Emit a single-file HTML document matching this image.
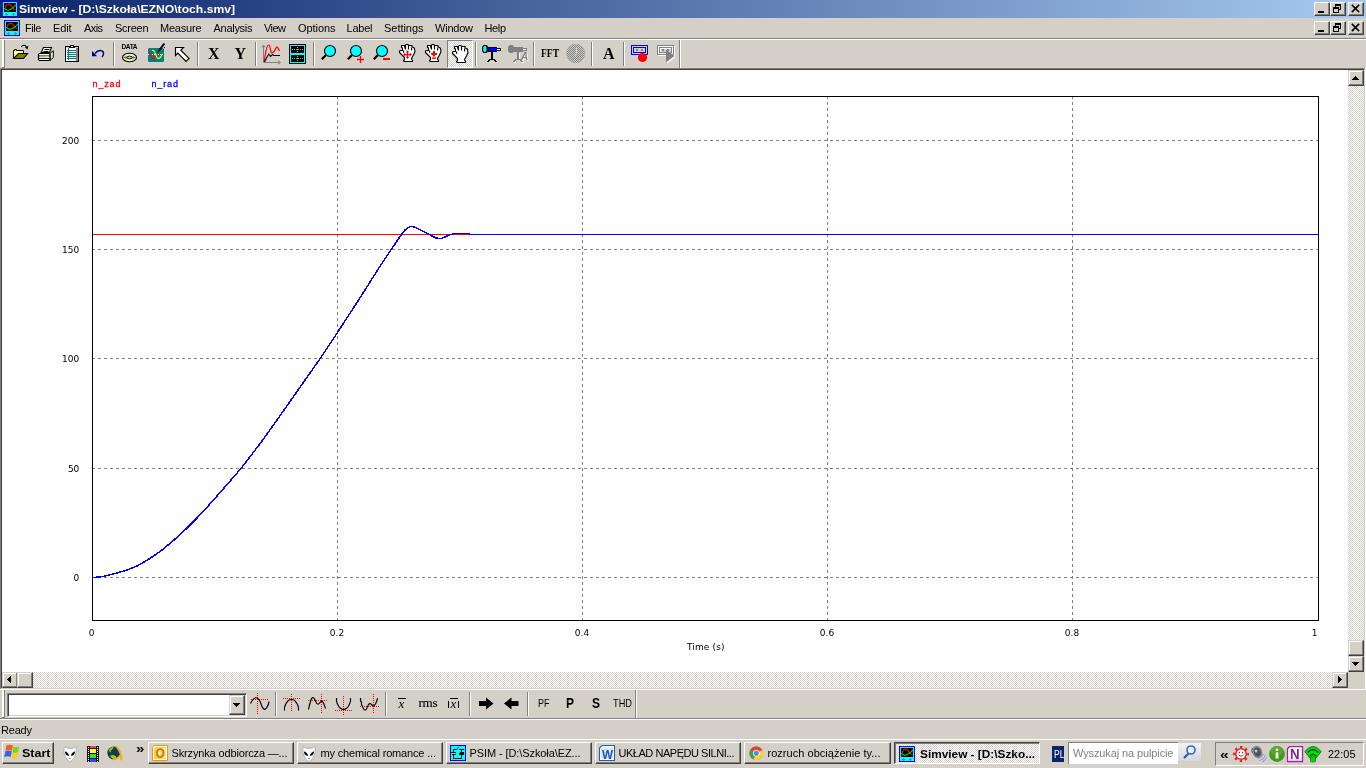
<!DOCTYPE html>
<html lang="pl"><head><meta charset="utf-8"><title>Simview - [D:\Szkoła\EZNO\toch.smv]</title>
<style>
html,body{margin:0;padding:0;}
body{width:1366px;height:768px;overflow:hidden;background:#d4d0c8;position:relative;font:11px 'Liberation Sans',sans-serif;}
.a{position:absolute;}
.t{position:absolute;white-space:pre;}
svg{position:absolute;overflow:visible;}
.btn{position:absolute;background:#d4d0c8;box-sizing:border-box;border:1px solid;border-color:#fff #404040 #404040 #fff;box-shadow:inset -1px -1px 0 #808080, inset 1px 1px 0 #d4d0c8;}
.sbtn{position:absolute;background:#d4d0c8;box-sizing:border-box;border:1px solid;border-color:#d4d0c8 #404040 #404040 #d4d0c8;box-shadow:inset -1px -1px 0 #808080, inset 1px 1px 0 #fff;}
.dither{background:repeating-conic-gradient(#fff 0% 25%, #d4d0c8 0% 50%) 0 0/2px 2px;}
.sep{position:absolute;width:1px;background:#808080;box-shadow:1px 0 0 #fff;}
.hl{position:absolute;height:1px;}
.vl{position:absolute;width:1px;}
#wrap{position:absolute;left:0;top:0;width:1366px;height:768px;will-change:transform;}
</style></head><body><div id="wrap">
<div class="a" style="left:0;top:0;width:1366px;height:18px;background:linear-gradient(90deg,#0a246a 0%,#a6caf0 100%);"></div><svg style="left:2px;top:1px" width="16" height="16" viewBox="0 0 16 16" shape-rendering="crispEdges"><rect x="0" y="0" width="16" height="16" fill="#0000ff"/><rect x="1" y="1" width="14" height="14" fill="#00ffff"/><rect x="2" y="2" width="12" height="9" fill="#000"/><path d="M3.500 7.500V5.500L5 3.700L7 3.200L8.500 4L12 8.300L13.800 8.500" fill="none" stroke="#ff0000" stroke-width="1.200" shape-rendering="auto"/><path d="M2.300 7.200L5 9.300L6.500 9.300L9.500 7.800L11 6.800L14 3.800" fill="none" stroke="#00e000" stroke-width="1.100" shape-rendering="auto"/><path d="M3 13.500h3M4.500 12v3M10 13.500h3M11.500 12v3" stroke="#808080" stroke-width="1" fill="none"/></svg><span class="t" style="left:19.00px;top:3px;line-height:12px;font:normal bold 11px/12px 'Liberation Sans',sans-serif;color:#fff;transform:scaleX(1.1043);transform-origin:left;">Simview - [D:\Szkoła\EZNO\toch.smv]</span><div class="btn" style="left:1314px;top:2px;width:16px;height:14px"></div><div class="btn" style="left:1330px;top:2px;width:16px;height:14px"></div><div class="btn" style="left:1348px;top:2px;width:16px;height:14px"></div><svg style="left:1314px;top:2px" width="50" height="14" viewBox="0 0 50 14" shape-rendering="crispEdges"><rect x="4" y="9" width="6" height="2" fill="#000"/><path d="M21 2h6v2h-6zM21 4h1v2h-1zM26 4h1v4h-1zM25 7h2v1h-2z" fill="#000"/><path d="M19 5h6v2h-6zM19 7h1v4h-1zM24 7h1v4h-1zM19 10h6v1h-6z" fill="#000"/><path d="M38.5 3.5l6 6M44.5 3.5l-6 6" stroke="#000" stroke-width="1.7" fill="none" shape-rendering="auto" stroke-linecap="square"/></svg><svg style="left:4px;top:20px" width="16" height="16" viewBox="0 0 16 16" shape-rendering="crispEdges"><rect x="0" y="0" width="16" height="16" fill="#0000ff"/><rect x="1" y="1" width="14" height="14" fill="#00ffff"/><rect x="2" y="2" width="12" height="9" fill="#000"/><path d="M3.500 7.500V5.500L5 3.700L7 3.200L8.500 4L12 8.300L13.800 8.500" fill="none" stroke="#ff0000" stroke-width="1.200" shape-rendering="auto"/><path d="M2.300 7.200L5 9.300L6.500 9.300L9.500 7.800L11 6.800L14 3.800" fill="none" stroke="#00e000" stroke-width="1.100" shape-rendering="auto"/><path d="M3 13.500h3M4.500 12v3M10 13.500h3M11.500 12v3" stroke="#808080" stroke-width="1" fill="none"/></svg><span class="t" style="left:25.00px;top:22px;line-height:12px;font:normal normal 11px/12px 'Liberation Sans',sans-serif;color:#000;letter-spacing:-0.411px;">File</span><span class="t" style="left:53.00px;top:22px;line-height:12px;font:normal normal 11px/12px 'Liberation Sans',sans-serif;color:#000;letter-spacing:-0.156px;">Edit</span><span class="t" style="left:84.00px;top:22px;line-height:12px;font:normal normal 11px/12px 'Liberation Sans',sans-serif;color:#000;letter-spacing:-0.594px;">Axis</span><span class="t" style="left:115.00px;top:22px;line-height:12px;font:normal normal 11px/12px 'Liberation Sans',sans-serif;color:#000;letter-spacing:-0.272px;">Screen</span><span class="t" style="left:160.00px;top:22px;line-height:12px;font:normal normal 11px/12px 'Liberation Sans',sans-serif;color:#000;letter-spacing:-0.216px;">Measure</span><span class="t" style="left:213.50px;top:22px;line-height:12px;font:normal normal 11px/12px 'Liberation Sans',sans-serif;color:#000;letter-spacing:-0.281px;">Analysis</span><span class="t" style="left:264.00px;top:22px;line-height:12px;font:normal normal 11px/12px 'Liberation Sans',sans-serif;color:#000;letter-spacing:-0.552px;">View</span><span class="t" style="left:298.00px;top:22px;line-height:12px;font:normal normal 11px/12px 'Liberation Sans',sans-serif;color:#000;letter-spacing:-0.070px;">Options</span><span class="t" style="left:346.50px;top:22px;line-height:12px;font:normal normal 11px/12px 'Liberation Sans',sans-serif;color:#000;letter-spacing:-0.230px;">Label</span><span class="t" style="left:384.00px;top:22px;line-height:12px;font:normal normal 11px/12px 'Liberation Sans',sans-serif;color:#000;letter-spacing:-0.036px;">Settings</span><span class="t" style="left:435.00px;top:22px;line-height:12px;font:normal normal 11px/12px 'Liberation Sans',sans-serif;color:#000;letter-spacing:-0.225px;">Window</span><span class="t" style="left:484.50px;top:22px;line-height:12px;font:normal normal 11px/12px 'Liberation Sans',sans-serif;color:#000;letter-spacing:-0.375px;">Help</span><div class="btn" style="left:1314px;top:21px;width:16px;height:14px"></div><div class="btn" style="left:1330px;top:21px;width:16px;height:14px"></div><div class="btn" style="left:1348px;top:21px;width:16px;height:14px"></div><svg style="left:1314px;top:21px" width="50" height="14" viewBox="0 0 50 14" shape-rendering="crispEdges"><rect x="4" y="9" width="6" height="2" fill="#000"/><path d="M21 2h6v2h-6zM21 4h1v2h-1zM26 4h1v4h-1zM25 7h2v1h-2z" fill="#000"/><path d="M19 5h6v2h-6zM19 7h1v4h-1zM24 7h1v4h-1zM19 10h6v1h-6z" fill="#000"/><path d="M38.5 3.5l6 6M44.5 3.5l-6 6" stroke="#000" stroke-width="1.7" fill="none" shape-rendering="auto" stroke-linecap="square"/></svg><div class="hl" style="left:0;top:38px;width:1366px;background:#808080"></div><div class="hl" style="left:0;top:39px;width:1366px;background:#fff"></div><div class="a" style="left:2px;top:40px;width:2px;height:27px;background:#fff"></div><div class="a" style="left:4px;top:40px;width:1px;height:28px;background:#808080"></div><div class="a" style="left:2px;top:67px;width:3px;height:1px;background:#808080"></div><div class="sep" style="left:113px;top:42px;height:24px"></div><div class="sep" style="left:197px;top:42px;height:24px"></div><div class="sep" style="left:255px;top:42px;height:24px"></div><div class="sep" style="left:313px;top:42px;height:24px"></div><div class="sep" style="left:475px;top:42px;height:24px"></div><div class="sep" style="left:533px;top:42px;height:24px"></div><div class="sep" style="left:591px;top:42px;height:24px"></div><div class="sep" style="left:623px;top:42px;height:24px"></div><div class="sep" style="left:679px;top:40px;height:28px"></div><div class="hl" style="left:0;top:68px;width:1366px;background:#808080"></div><div class="hl" style="left:1px;top:69px;width:1364px;background:#404040"></div><svg style="left:0;top:40px" width="700" height="28" viewBox="0 40 700 28"><path d="M13.500 58.500V50.500H14.500V49.500H16.500V50.500H23.500V53.500H19L14 58.500Z" fill="#ffff80" stroke="#000" stroke-width="1" stroke-linejoin="miter"/><path d="M13.500 58.500L18.500 53.500H27.500L23.500 58.500Z" fill="#808000" stroke="#000" stroke-width="1.100"/><path d="M21.300 46.800q1.800-2.400 4-1.200q1.400 1 1.600 2.400" fill="none" stroke="#000" stroke-width="1.100"/><path d="M25 47.200l2.400 2.200 1.100-3.400z" fill="#000"/><path d="M43.500 47.500H51.500L49.500 52.500H41.200Z" fill="#fff" stroke="#000" stroke-width="1.100"/><path d="M44.500 49.500h5M43.500 51.500h5" stroke="#000" stroke-width="1"/><path d="M50 53.200L53.300 50.800V57.600L50 60.500Z" fill="#e8e6e2" stroke="#000" stroke-width="1"/><rect x="38.500" y="53.500" width="11.500" height="7" rx="1.200" fill="#fff" stroke="#000" stroke-width="1.200"/><path d="M39 56h11M39 58.400h11" stroke="#000" stroke-width="1"/><rect x="39.500" y="56.600" width="9.500" height="1.200" fill="#e0deda"/><rect x="45" y="56.600" width="3" height="1.200" fill="#ffff00"/><g shape-rendering="crispEdges"><rect x="65.500" y="46.500" width="13" height="15" fill="#d4d0c8" stroke="#000"/><rect x="66" y="48" width="10" height="13" fill="#fff"/><rect x="76" y="48" width="2" height="13" fill="#808080"/><path d="M67 50.500h9M67 52.500h9M67 54.500h9M67 56.500h9M67 58.500h9" stroke="#008080"/><rect x="68" y="48" width="1" height="12" fill="#008080"/><path d="M69.500 47.500v-1h1v-1h3v1h1v1z" fill="#fff" stroke="#000"/></g><path d="M95 53.500Q97.500 50.300 100.500 50.500Q103.800 51 103.500 54Q103.300 55.500 102 57" fill="none" stroke="#000080" stroke-width="1.400"/><path d="M92 51v5.200h5.200z" fill="#000080"/><ellipse cx="129.5" cy="57.5" rx="7" ry="4.200" fill="#fff" stroke="#000" stroke-width="1.100"/><path d="M123.500 57.500h12" stroke="#ff00ff" stroke-width="1.200"/><path d="M125.500 55l8 5M125.500 60l8-5" stroke="#ffff00" stroke-width="1.200"/><path d="M124.500 56.300l10 2.400M124.500 58.700l10-2.400" stroke="#00ff00" stroke-width=".8"/><ellipse cx="129.5" cy="57.5" rx="2.600" ry="1.400" fill="#d4d0c8" stroke="#000" stroke-width="1"/><rect x="148" y="48" width="16" height="14" rx="1.500" fill="#008080"/><path d="M148 54.500h16" stroke="#fff" stroke-width="1" stroke-dasharray="1 1"/><path d="M149.500 50.500q1.500 8 3.500 8.500t3.500-7" fill="none" stroke="#ff0000" stroke-width="1.200"/><path d="M152 50.500q2-1 3.500 3.500t3 4.500q2 0 3.500-4.500" fill="none" stroke="#ffff00" stroke-width="1.100"/><path d="M164.300 43.500l-5.500 7.500" stroke="#000" stroke-width="2"/><path d="M158.500 51l-1 1.500" stroke="#000" stroke-width="1"/><rect x="164" y="47" width="1" height="1" fill="#0000ff"/><path d="M175.500 47.500H183.500L180.800 50.200L189 58.400L186 61.400L177.800 53.200L175.500 55.500Z" fill="#fff" stroke="#000" stroke-width="1.200" stroke-linejoin="miter"/><path d="M263.500 62v-16M261.800 47.500l1.700-2.500 1.700 2.500M263.500 62.500h16M278 60.800l2.500 1.700-2.500 1.700" fill="none" stroke="#808080" stroke-width="1"/><path d="M264 62l1.500-9q1.500-8 3-8t2 4.500 2.500 3 3-4.500 3.500 3" fill="none" stroke="#ff0000" stroke-width="1.200"/><path d="M264.500 62l2.500-5 1.800-3 1.700 2.500 2-1.800 1.500.800h6" fill="none" stroke="#000" stroke-width="1.100"/><g shape-rendering="crispEdges"><rect x="289" y="44" width="17" height="20" fill="#000"/><rect x="290" y="45" width="15" height="18" fill="#00ffff"/><rect x="291" y="46" width="13" height="7" fill="#000"/><rect x="291" y="55" width="13" height="7" fill="#000"/><path d="M292 49.500h11M292 58.500h11" stroke="#a0a0a0" stroke-dasharray="1 1"/><path d="M297.500 47v6M297.500 56v6" stroke="#a0a0a0" stroke-dasharray="1 1"/></g><path d="M325.8,55.2 L321.8,59.2" stroke="#000" stroke-width="2.200" stroke-linecap="butt" fill="none"/><circle cx="330" cy="51" r="5.500" fill="#00ffff" stroke="#000" stroke-width="1.150"/><path d="M351.8,55.2 L347.8,59.2" stroke="#000" stroke-width="2.200" stroke-linecap="butt" fill="none"/><circle cx="356" cy="51" r="5.500" fill="#00ffff" stroke="#000" stroke-width="1.150"/><path d="M357 59.500h7M360.500 56v7" stroke="#ff0000" stroke-width="1.300"/><path d="M377.8,55.2 L373.8,59.2" stroke="#000" stroke-width="2.200" stroke-linecap="butt" fill="none"/><circle cx="382" cy="51" r="5.500" fill="#00ffff" stroke="#000" stroke-width="1.150"/><rect x="383" y="58" width="7" height="2" fill="#ff0000"/><g transform="translate(399,44)"><path d="M0.5,7.5 L1,6.5 L3.5,6.5 L3.5,4 L2.5,3.5 L2.5,1.5 L6.5,1.5 L7,0.5 L9,0.5 L9.5,1.5 L13,1.500 L13,3 L14.500,3.500 L15.500,4.500 L16,7.500 L14.500,11 L13,13.500 L12.500,15 L13.500,16.500 L13.500,17.500 L5,17.500 L4.500,16.500 L5.500,15.500 L5.500,13.500 L1.500,9.500 L0.500,8.500 Z" fill="#fff" stroke="#000" stroke-width="1.150" stroke-linejoin="round"/><path d="M6.500 1.500V5.500M9.500 1.500V5.500M12.600 3.500V6.500" stroke="#000" stroke-width="1.100" fill="none"/><path d="M5 2h1.500v2.500h-1zM4 6.500h1.200v2.200h-1.200z" fill="#000"/><path d="M5 10.600h7M8.500 7v7.200" stroke="#ff0000" stroke-width="1.100"/><path d="M8.500 6.200l-1.800 2.200h3.600zM8.500 15l-1.800-2.200h3.600zM4.100 10.600l2.200-1.800v3.600zM12.900 10.600l-2.200-1.800v3.600z" fill="#ff0000"/></g><g transform="translate(425,44)"><path d="M0.5,7.5 L1,6.5 L3.5,6.5 L3.5,4 L2.5,3.5 L2.5,1.5 L6.5,1.5 L7,0.5 L9,0.5 L9.5,1.5 L13,1.500 L13,3 L14.500,3.500 L15.500,4.500 L16,7.500 L14.500,11 L13,13.500 L12.500,15 L13.500,16.500 L13.500,17.500 L5,17.500 L4.500,16.500 L5.500,15.500 L5.500,13.500 L1.500,9.500 L0.500,8.500 Z" fill="#fff" stroke="#000" stroke-width="1.150" stroke-linejoin="round"/><path d="M6.500 1.500V5.500M9.500 1.500V5.500M12.600 3.500V6.500" stroke="#000" stroke-width="1.100" fill="none"/><path d="M5 2h1.500v2.500h-1zM4 6.500h1.200v2.200h-1.200z" fill="#000"/><path d="M6.200 10h5.800M9 7v5.600" stroke="#ff0000" stroke-width="2"/><rect x="7" y="13.500" width="4.100" height="1.400" fill="#ff0000"/></g></svg><div class="a dither" style="left:447px;top:40px;width:26px;height:28px;box-sizing:border-box;border:1px solid;border-color:#808080 #fff #fff #808080"></div><svg style="left:0;top:40px" width="700" height="28" viewBox="0 40 700 28"><g transform="translate(452,45)"><path d="M0.5,7.5 L1,6.5 L3.5,6.5 L3.5,4 L2.5,3.5 L2.5,1.5 L6.5,1.5 L7,0.5 L9,0.5 L9.5,1.5 L13,1.500 L13,3 L14.500,3.500 L15.500,4.500 L16,7.500 L14.500,11 L13,13.500 L12.500,15 L13.500,16.500 L13.500,17.500 L5,17.500 L4.500,16.500 L5.500,15.500 L5.500,13.500 L1.500,9.500 L0.500,8.500 Z" fill="#fff" stroke="#000" stroke-width="1.150" stroke-linejoin="round"/><path d="M6.500 1.500V5.500M9.500 1.500V5.500M12.600 3.500V6.500" stroke="#000" stroke-width="1.100" fill="none"/><path d="M5 2h1.500v2.500h-1zM4 6.500h1.200v2.200h-1.200z" fill="#000"/></g><g shape-rendering="crispEdges"><rect x="491" y="52" width="2" height="7" fill="#000"/><path d="M489 59.500h6M488 60.500h2M494 60.500h2M487 61.500h2M495 61.500h2" stroke="#000"/><rect x="488" y="47" width="9" height="5" fill="#000"/><rect x="489" y="48" width="8" height="3" fill="#0000ff"/><rect x="497" y="48" width="4" height="3" fill="#000"/><rect x="497" y="49" width="3" height="1" fill="#fff"/></g><path d="M483.500 45h3l2 2v4l-2 2h-3l-1.500-2v-4z" fill="#000"/><path d="M484 46h1.600l.8 1.500v3l-.8 1.500h-1.600l-.8-1.500v-3z" fill="#00ffff"/><g shape-rendering="crispEdges"><rect x="518" y="53" width="2" height="7" fill="#fff"/><rect x="517" y="52" width="2" height="7" fill="#808080"/><path d="M515 59.500h6M514 60.500h2M520 60.500h2M513 61.500h2M521 61.500h2" stroke="#808080"/><path d="M515 61.500h1M522 62.500h2M514 62.500h2" stroke="#fff"/><rect x="513" y="47" width="10" height="5" fill="#808080"/><rect x="523" y="48" width="4" height="3" fill="#808080"/><rect x="523" y="49" width="3" height="1" fill="#fff"/></g><path d="M509.500 45h3l1.500 2v4l-1.500 2h-3l-1.500-2v-4z" fill="#808080"/><defs><pattern id="dg" width="2" height="2" patternUnits="userSpaceOnUse"><rect width="2" height="2" fill="#d4d0c8"/><rect width="1" height="1" fill="#808080"/><rect x="1" y="1" width="1" height="1" fill="#808080"/></pattern></defs><circle cx="575.700" cy="53.500" r="9.600" fill="url(#dg)" shape-rendering="crispEdges"/><circle cx="575.700" cy="53.500" r="9.300" fill="none" stroke="#b4b2ae" stroke-width=".8"/><path d="M576.500 47v6.500l-2 2.500" stroke="#d4d0c8" stroke-width="1.100" fill="none"/><g shape-rendering="crispEdges"><rect x="631.500" y="45.500" width="16" height="9" fill="none" stroke="#0000ff"/><rect x="633.500" y="47.500" width="12" height="5" fill="none" stroke="#0000ff"/><rect x="636" y="49" width="2" height="2" fill="#808080"/><rect x="641" y="49" width="2" height="2" fill="#808080"/></g><circle cx="642.500" cy="57.500" r="4.600" fill="#ff0000"/><g shape-rendering="crispEdges"><rect x="658.500" y="46.500" width="16" height="9" fill="none" stroke="#fff"/><rect x="660.500" y="48.500" width="12" height="5" fill="none" stroke="#fff"/><rect x="657.500" y="45.500" width="16" height="9" fill="none" stroke="#808080"/><rect x="659.500" y="47.500" width="12" height="5" fill="none" stroke="#808080"/><rect x="662" y="49" width="2" height="2" fill="#808080"/><rect x="667" y="49" width="2" height="2" fill="#808080"/></g><path d="M667 50.500v13l8.500-6.500z" fill="#fff"/><path d="M666 49.500v13l8.500-6.500z" fill="#808080"/></svg><span class="t" style="left:121.50px;top:43px;line-height:7px;font:normal bold 6.5px/7px 'Liberation Sans',sans-serif;color:#000;letter-spacing:-0.365px;">DATA</span><span class="t" style="left:208.00px;top:45px;line-height:17px;font:normal bold 16px/17px 'Liberation Serif',serif;color:#000;">X</span><span class="t" style="left:234.50px;top:45px;line-height:17px;font:normal bold 16px/17px 'Liberation Serif',serif;color:#000;">Y</span><span class="t" style="left:541.00px;top:46px;line-height:14px;font:normal bold 12px/14px 'Liberation Serif',serif;color:#000;transform:scaleX(.8);transform-origin:left;">FFT</span><span class="t" style="left:603.00px;top:45px;line-height:17px;font:normal bold 16px/17px 'Liberation Serif',serif;color:#000;">A</span><span class="t" style="left:521.00px;top:51px;line-height:11px;font:italic bold 10px/11px 'Liberation Sans',sans-serif;color:#808080;text-shadow:1px 1px 0 #fff;">A</span><div class="a" style="left:0;top:70px;width:1px;height:619px;background:#808080"></div><div class="a" style="left:0;top:68px;width:1px;height:2px;background:#808080"></div><div class="a" style="left:1px;top:69px;width:1px;height:619px;background:#404040"></div><div class="a" style="left:2px;top:70px;width:1362px;height:618px;background:#fff"></div><div class="a" style="left:1365px;top:68px;width:1px;height:622px;background:#fff"></div><div class="a" style="left:1364px;top:69px;width:1px;height:620px;background:#d4d0c8"></div><div class="hl" style="left:1px;top:688px;width:1364px;background:#d4d0c8"></div><div class="hl" style="left:0;top:689px;width:1366px;background:#fff"></div><div class="a dither" style="left:1348px;top:70px;width:16px;height:602px"></div><div class="sbtn" style="left:1348px;top:70px;width:16px;height:16px"></div><div class="sbtn" style="left:1348px;top:640px;width:16px;height:16px"></div><div class="sbtn" style="left:1348px;top:656px;width:16px;height:16px"></div><div class="a dither" style="left:2px;top:672px;width:1346px;height:16px"></div><div class="sbtn" style="left:2px;top:672px;width:16px;height:16px"></div><div class="sbtn" style="left:17px;top:672px;width:16px;height:16px"></div><div class="sbtn" style="left:1332px;top:672px;width:16px;height:16px"></div><div class="a" style="left:1348px;top:672px;width:16px;height:16px;background:#d4d0c8"></div><svg style="left:0;top:0" width="1366" height="768" viewBox="0 0 1366 768" shape-rendering="crispEdges"><path d="M1352 80h7l-3.500-4z" fill="#000"/><path d="M1352 662h7l-3.500 4z" fill="#000"/><path d="M11 676v7l-4-3.500z" fill="#000"/><path d="M1338 676v7l4-3.500z" fill="#000"/></svg><svg style="left:0;top:0" width="1366" height="768" viewBox="0 0 1366 768"><g shape-rendering="crispEdges" fill="none"><path d="M337.5 96V620" stroke="#808080" stroke-dasharray="3 3"/><path d="M582.5 96V620" stroke="#808080" stroke-dasharray="3 3"/><path d="M827.5 96V620" stroke="#808080" stroke-dasharray="3 3"/><path d="M1072.5 96V620" stroke="#808080" stroke-dasharray="3 3"/><path d="M92 140.5H1318" stroke="#808080" stroke-dasharray="3 3"/><path d="M92 249.5H1318" stroke="#808080" stroke-dasharray="3 3"/><path d="M92 358.5H1318" stroke="#808080" stroke-dasharray="3 3"/><path d="M92 468.5H1318" stroke="#808080" stroke-dasharray="3 3"/><path d="M92 577.5H1318" stroke="#808080" stroke-dasharray="3 3"/><rect x="92.500" y="96.500" width="1226" height="524" stroke="#000"/><path d="M93 234.500H1318" stroke="#ff0000"/><path d="M92.5,577.5 L100.0,577.0 L108.0,575.4 L117.0,573.0 L127.0,570.0 L138.0,565.5 L150.0,558.5 L162.0,550.0 L174.0,540.0 L186.0,529.0 L197.0,518.0 L209.0,505.0 L221.0,491.5 L241.0,468.5 L263.4,439.2 L288.7,403.4 L320.2,358.4 L337.4,332.6 L360.3,297.4 L380.3,265.8 L391.8,248.7 L399.0,238.0 L402.0,234.0 L405.0,230.0 L408.0,227.6 L411.0,226.5 L413.5,226.7 L417.0,228.3 L421.0,230.2 L425.0,232.2 L429.0,234.3 L433.0,236.5 L436.0,238.0 L439.0,238.5 L442.0,238.3 L446.0,236.5 L451.0,234.5 L455.0,233.5 L469.0,233.5 L470.0,234.5 L1318.0,234.5" stroke="#0000ff" stroke-width="1.5" stroke-linejoin="round"/></g></svg><span class="t" style="left:62.00px;top:136px;line-height:10px;font:normal normal 9px/10px 'DejaVu Sans','Liberation Sans',sans-serif;color:#000;letter-spacing:0.056px;">200</span><span class="t" style="left:62.00px;top:245px;line-height:10px;font:normal normal 9px/10px 'DejaVu Sans','Liberation Sans',sans-serif;color:#000;letter-spacing:0.056px;">150</span><span class="t" style="left:62.00px;top:354px;line-height:10px;font:normal normal 9px/10px 'DejaVu Sans','Liberation Sans',sans-serif;color:#000;letter-spacing:0.056px;">100</span><span class="t" style="left:68.00px;top:464px;line-height:10px;font:normal normal 9px/10px 'DejaVu Sans','Liberation Sans',sans-serif;color:#000;letter-spacing:-0.153px;">50</span><span class="t" style="left:73.57px;top:573px;line-height:10px;font:normal normal 9px/10px 'DejaVu Sans','Liberation Sans',sans-serif;color:#000;">0</span><span class="t" style="left:88.63px;top:628px;line-height:10px;font:normal normal 9px/10px 'DejaVu Sans','Liberation Sans',sans-serif;color:#000;">0</span><span class="t" style="left:329.75px;top:628px;line-height:10px;font:normal normal 9px/10px 'DejaVu Sans','Liberation Sans',sans-serif;color:#000;letter-spacing:0.086px;">0.2</span><span class="t" style="left:574.75px;top:628px;line-height:10px;font:normal normal 9px/10px 'DejaVu Sans','Liberation Sans',sans-serif;color:#000;letter-spacing:0.086px;">0.4</span><span class="t" style="left:819.75px;top:628px;line-height:10px;font:normal normal 9px/10px 'DejaVu Sans','Liberation Sans',sans-serif;color:#000;letter-spacing:0.086px;">0.6</span><span class="t" style="left:1064.75px;top:628px;line-height:10px;font:normal normal 9px/10px 'DejaVu Sans','Liberation Sans',sans-serif;color:#000;letter-spacing:0.086px;">0.8</span><span class="t" style="left:1311.77px;top:628px;line-height:10px;font:normal normal 9px/10px 'DejaVu Sans','Liberation Sans',sans-serif;color:#000;">1</span><span class="t" style="left:687.00px;top:642px;line-height:10px;font:normal normal 9px/10px 'DejaVu Sans','Liberation Sans',sans-serif;color:#000;letter-spacing:0.127px;">Time (s)</span><span class="t" style="left:92.50px;top:79px;line-height:10px;font:normal normal 9px/10px 'Liberation Sans',sans-serif;color:#ff0000;letter-spacing:0.867px;-webkit-text-stroke:.3px #ff0000;">n_zad</span><span class="t" style="left:151.50px;top:79px;line-height:10px;font:normal normal 9px/10px 'Liberation Sans',sans-serif;color:#0000ff;letter-spacing:0.867px;-webkit-text-stroke:.3px #0000ff;">n_rad</span><div class="a" style="left:2px;top:690px;width:2px;height:27px;background:#fff"></div><div class="a" style="left:4px;top:690px;width:1px;height:28px;background:#808080"></div><div class="a" style="left:2px;top:717px;width:3px;height:1px;background:#808080"></div><div class="a" style="left:7px;top:693px;width:240px;height:24px;box-sizing:border-box;background:#fff;border:1px solid;border-color:#808080 #fff #fff #808080;box-shadow:inset 1px 1px 0 #404040, inset -1px -1px 0 #d4d0c8"></div><div class="sbtn" style="left:229px;top:695px;width:16px;height:20px"></div><svg style="left:0;top:0" width="300" height="768" viewBox="0 0 300 768" shape-rendering="crispEdges"><path d="M233 703h7l-3.500 4z" fill="#000"/></svg><div class="sep" style="left:275px;top:692px;height:24px"></div><div class="sep" style="left:385px;top:692px;height:24px"></div><div class="sep" style="left:469px;top:692px;height:24px"></div><div class="sep" style="left:527px;top:692px;height:24px"></div><div class="sep" style="left:635px;top:690px;height:28px"></div><div class="hl" style="left:0;top:718px;width:1366px;background:#808080"></div><div class="hl" style="left:0;top:719px;width:1366px;background:#fff"></div><svg style="left:0;top:690px" width="700" height="28" viewBox="0 690 700 28" fill="none"><path d="M257.500 693v21M251 699.500h18" stroke="#ff0000" stroke-width="1" stroke-dasharray="1 1" shape-rendering="crispEdges"/><path d="M250.500 703.500q3.500-7 6.500-5.500t4.500 7.500q2.500 6 5 2.500t2.500-6.500" stroke="#000" stroke-width="1.150"/><path d="M291.500 694v17M283 698.500h17" stroke="#ff0000" stroke-width="1" stroke-dasharray="1 1" shape-rendering="crispEdges"/><path d="M284.500 710.500V707.500L285.500 704.500L286.500 702.800L288 700.800Q290 699.300 291.500 699.300Q293.500 699.300 295 700.800L296.500 702.800L297.500 704.500L298.500 707.500V710.500" stroke="#000" stroke-width="1.150"/><path d="M321.500 694v19M308 700.500h19" stroke="#ff0000" stroke-width="1" stroke-dasharray="1 1" shape-rendering="crispEdges"/><path d="M308.500 709.500L309.500 705L310.500 701.500L311.500 698.700Q313 696.500 314.500 699L316.500 703Q318 705.300 319.500 703L321.300 701.200L322.500 701.500L323.500 703L324.500 705.500L325.500 708.700" stroke="#000" stroke-width="1.150"/><path d="M343.500 696v19M335 710.500h17" stroke="#ff0000" stroke-width="1" stroke-dasharray="1 1" shape-rendering="crispEdges"/><path d="M336.500 698V701.500L337.500 704L338.500 706L340 708Q342 709.600 343.500 709.600Q345 709.600 347 708L348.500 706L349.500 704L350.500 701.500V698" stroke="#000" stroke-width="1.150"/><path d="M373.500 694v19M360 706.500h19" stroke="#ff0000" stroke-width="1" stroke-dasharray="1 1" shape-rendering="crispEdges"/><path d="M360.500 698V700.500L361.500 702.500V704.500L362.500 706.500L363.500 708.700Q365 711.200 366.500 709L367.500 706.500L368.500 704.500Q370 702.600 371.500 704.500L373 706Q374 706.200 375.500 704L376.500 701.500L377.600 698.300" stroke="#000" stroke-width="1.150"/><path d="M479 701h7v-3.500l7.500 6-7.500 6v-3.500h-7z" fill="#000"/><path d="M518.500 701h-7v-3.500l-7.500 6 7.500 6v-3.500h7z" fill="#000"/><g shape-rendering="crispEdges" stroke="#000"><path d="M398 698.500h8M450 698.500h8M448.500 701v7M458.500 701v7"/></g></svg><span class="t" style="left:398.50px;top:696px;line-height:15px;font:italic normal 13px/15px 'Liberation Serif',serif;color:#000;">x</span><span class="t" style="left:418.50px;top:695px;line-height:15px;font:normal normal 13px/15px 'Liberation Serif',serif;color:#000;letter-spacing:-0.250px;-webkit-text-stroke:.15px #000;">rms</span><span class="t" style="left:450.50px;top:696px;line-height:15px;font:italic normal 13px/15px 'Liberation Serif',serif;color:#000;">x</span><span class="t" style="left:537.50px;top:697px;line-height:12px;font:normal normal 11px/12px 'Liberation Sans',sans-serif;color:#000;transform:scaleX(0.8178);transform-origin:left;">PF</span><span class="t" style="left:565.50px;top:695px;line-height:16px;font:normal bold 14px/16px 'Liberation Sans',sans-serif;color:#000;transform:scaleX(.86);transform-origin:left;">P</span><span class="t" style="left:591.50px;top:695px;line-height:16px;font:normal bold 14px/16px 'Liberation Sans',sans-serif;color:#000;transform:scaleX(.86);transform-origin:left;">S</span><span class="t" style="left:612.50px;top:697px;line-height:12px;font:normal normal 11px/12px 'Liberation Sans',sans-serif;color:#000;transform:scaleX(0.8404);transform-origin:left;">THD</span><span class="t" style="left:1.00px;top:724px;line-height:12px;font:normal normal 11px/12px 'Liberation Sans',sans-serif;color:#000;letter-spacing:-0.199px;">Ready</span><div class="hl" style="left:0;top:739px;width:1366px;background:#fff"></div><div class="btn" style="left:2px;top:742px;width:52px;height:22px"></div><svg style="left:0;top:741px" width="32" height="24" viewBox="0 741 32 24"><path d="M6.300 745.600Q9.500 744 12.900 745.600L12 750.600Q9 749.300 5.600 750.800Z" fill="#f2601c"/><path d="M13.300 746.500Q16 748 19 746.300L18 752.200Q15 753.600 12.400 752.200Z" fill="#78d818"/><path d="M5.400 751.200Q8.500 749.800 11.700 751.200L10.800 756.800Q7.800 755.500 4.300 757Z" fill="#3a62ea"/><path d="M12.100 752.800Q15 754.300 17.800 752.800L16.900 758Q14 759.500 11.200 758Z" fill="#fbd010"/></svg><span class="t" style="left:21.50px;top:747px;line-height:12px;font:normal bold 11px/12px 'Liberation Sans',sans-serif;color:#000;transform:scaleX(1.1372);transform-origin:left;">Start</span><svg style="left:63px;top:746px" width="14" height="16" viewBox="0 0 14 16"><path d="M1 .500q2.500 2 6 2t6-2q1 6-1.500 10.500-2 4-4.500 4.500-2.500-.500-4.500-4.500-2.500-4.500-1.500-10.500z" fill="#fff" stroke="#a8a8a8" stroke-width=".8"/><path d="M1.800 5.500q3 .300 4.400 4.200-3.600 .600-4.400-4.200zM12.200 5.500q-3 .300-4.400 4.200 3.600 .600 4.400-4.200z" fill="#000"/><path d="M6 12.500h2" stroke="#808080" stroke-width=".8"/></svg><svg style="left:87px;top:746px" width="12" height="16" viewBox="0 0 12 16" shape-rendering="crispEdges"><rect x="0" y="0" width="12" height="16" fill="#181818"/><rect x="3" y="0" width="6" height="2" fill="#f04848"/><rect x="3" y="3" width="6" height="4" fill="#f8f840"/><rect x="3" y="8" width="6" height="4" fill="#38e038"/><rect x="3" y="13" width="6" height="3" fill="#3048f0"/><path d="M1.500 1v15M10.500 1v15" stroke="#fff" stroke-dasharray="1 1"/></svg><svg style="left:107px;top:745px" width="18" height="18" viewBox="107 745 18 18"><circle cx="113.800" cy="753" r="6.500" fill="#0f3d4c"/><path d="M109 750q1.500-3 4.500-3.500q.5 2-1.500 3t-1 2.500q-1.500 1-2-2zM110 756q2-1.500 4.500-.5t1.500 3q-3.500 1.500-6-2.500z" fill="#9ccc18"/><path d="M116 746.300Q120 750 121.800 758.500M112.500 759.300Q117 759.800 120.500 755" fill="none" stroke="#f0b010" stroke-width="1.800"/><path d="M120.300 756l2.200 4.500-2.800-.5z" fill="#f0b010"/></svg><span class="t" style="left:135.50px;top:741.5px;line-height:14px;font:normal bold 12px/14px 'Liberation Sans',sans-serif;color:#000;transform:scaleX(1.25);transform-origin:left;">»</span><div class="btn" style="left:148px;top:742px;width:146px;height:22px"></div><div class="btn" style="left:297px;top:742px;width:146px;height:22px"></div><div class="btn" style="left:446px;top:742px;width:146px;height:22px"></div><div class="btn" style="left:595px;top:742px;width:146px;height:22px"></div><div class="btn" style="left:744px;top:742px;width:147px;height:22px"></div><div class="a dither" style="left:894px;top:742px;width:146px;height:22px;box-sizing:border-box;border:1px solid;border-color:#404040 #fff #fff #404040;box-shadow:inset 1px 1px 0 #808080"></div><svg style="left:152px;top:745px" width="16" height="16" viewBox="0 0 16 16"><path d="M2.500 .5H15.500V15.500H.5V2.500Z" fill="#fff" stroke="#e8960e"/><path d="M3.500 2H14V14H2V3.500Z" fill="#fcd32e"/><path d="M10.500 3.500H13V12.500H10.500" fill="none" stroke="#fff" stroke-width="1.200"/><ellipse cx="8.300" cy="8" rx="3.300" ry="4" fill="#fdd84a" stroke="#d97a10" stroke-width="2.200"/><ellipse cx="7.600" cy="8" rx="1.100" ry="2.400" fill="#fff"/></svg><span class="t" style="left:171.50px;top:747px;line-height:12px;font:normal normal 11px/12px 'Liberation Sans',sans-serif;color:#000;letter-spacing:-0.146px;">Skrzynka odbiorcza —...</span><svg style="left:302px;top:746px" width="14" height="16" viewBox="0 0 14 16"><path d="M1 .500q2.500 2 6 2t6-2q1 6-1.500 10.500-2 4-4.500 4.500-2.500-.500-4.500-4.500-2.500-4.500-1.500-10.500z" fill="#fff" stroke="#a8a8a8" stroke-width=".8"/><path d="M1.800 5.500q3 .300 4.400 4.200-3.600 .600-4.400-4.200zM12.200 5.500q-3 .300-4.400 4.200 3.600 .600 4.400-4.200z" fill="#000"/><path d="M6 12.500h2" stroke="#808080" stroke-width=".8"/></svg><span class="t" style="left:320.50px;top:747px;line-height:12px;font:normal normal 11px/12px 'Liberation Sans',sans-serif;color:#000;letter-spacing:-0.168px;">my chemical romance ...</span><svg style="left:450px;top:745px" width="16" height="16" viewBox="0 0 16 16" shape-rendering="crispEdges"><rect x="0" y="0" width="16" height="16" fill="#0000ff"/><rect x="1" y="1" width="14" height="14" fill="#00ffff"/><path d="M1 7.500h5M3 4.500h4M3.500 4v3M9 4.500h5M11.500 4v10M10 7.500h4M9 8.500h5M9 9.500h5M2 9.500h4M3.500 9v5M3 13.500h9" stroke="#000" fill="none" stroke-width="1"/><path d="M7 3h1v1h-1zM8 2h1v1h-1z" fill="#000"/></svg><span class="t" style="left:469.50px;top:747px;line-height:12px;font:normal normal 11px/12px 'Liberation Sans',sans-serif;color:#000;letter-spacing:-0.094px;">PSIM - [D:\Szkoła\EZ...</span><svg style="left:599px;top:745px" width="16" height="16" viewBox="0 0 16 16"><path d="M3 .5H15.500V15.500H.5V3Z" fill="#fff" stroke="#2a5db0" stroke-width="1.100"/><rect x="2" y="2.500" width="12" height="11" fill="#dbe6fb"/></svg><span class="t" style="left:601.50px;top:746.5px;line-height:15px;font:normal bold 13px/15px 'Liberation Sans',sans-serif;color:#1358c4;transform:scaleX(.9);transform-origin:left;">W</span><span class="t" style="left:618.50px;top:747px;line-height:12px;font:normal normal 11px/12px 'Liberation Sans',sans-serif;color:#000;letter-spacing:-0.466px;">UKŁAD NAPĘDU SILNI...</span><svg style="left:749px;top:746px" width="14.500" height="14.500" viewBox="0 0 16 16"><circle cx="8" cy="8" r="7.500" fill="#e8402f"/><path d="M8 8L1.500 4.200A7.500 7.500 0 0 0 5 14.900z" fill="#3fa540"/><path d="M8 8L5 14.900A7.500 7.500 0 0 0 14.500 4.200z" fill="#fcd12a"/><path d="M8 8L1.500 4.200A7.500 7.500 0 0 1 14.500 4.200z" fill="#e8402f"/><circle cx="8" cy="8" r="3.600" fill="#fff"/><circle cx="8" cy="8" r="2.800" fill="#4a8af4"/></svg><span class="t" style="left:767.50px;top:747px;line-height:12px;font:normal normal 11px/12px 'Liberation Sans',sans-serif;color:#000;letter-spacing:0.031px;">rozruch obciążenie ty...</span><svg style="left:899px;top:746px" width="16" height="16" viewBox="0 0 16 16" shape-rendering="crispEdges"><rect x="0" y="0" width="16" height="16" fill="#0000ff"/><rect x="1" y="1" width="14" height="14" fill="#00ffff"/><rect x="2" y="2" width="12" height="9" fill="#000"/><path d="M3.500 7.500V5.500L5 3.700L7 3.200L8.500 4L12 8.300L13.800 8.500" fill="none" stroke="#ff0000" stroke-width="1.200" shape-rendering="auto"/><path d="M2.300 7.200L5 9.300L6.500 9.300L9.500 7.800L11 6.800L14 3.800" fill="none" stroke="#00e000" stroke-width="1.100" shape-rendering="auto"/><path d="M3 13.500h3M4.500 12v3M10 13.500h3M11.500 12v3" stroke="#808080" stroke-width="1" fill="none"/></svg><span class="t" style="left:919.50px;top:748px;line-height:12px;font:normal bold 11px/12px 'Liberation Sans',sans-serif;color:#000;transform:scaleX(1.0751);transform-origin:left;">Simview - [D:\Szko...</span><div class="a" style="left:1052px;top:746px;width:12px;height:16px;background:#0a246a;overflow:hidden"></div><span class="t" style="left:1054.00px;top:748px;line-height:12px;font:normal normal 11px/12px 'Liberation Sans',sans-serif;color:#fff;transform:scaleX(0.7796);transform-origin:left;">PL</span><div class="a" style="left:1068px;top:742px;width:110px;height:22px;background:#fff;box-sizing:border-box;border-top:1px solid #808080;border-left:1px solid #808080"></div><span class="t" style="left:1073.00px;top:747px;line-height:12px;font:normal normal 11px/12px 'Liberation Sans',sans-serif;color:#808080;letter-spacing:-0.112px;">Wyszukaj na pulpicie</span><div class="a" style="left:1178px;top:743px;width:23px;height:18px;background:linear-gradient(#f2f2f6,#d6d6dc)"></div><svg style="left:1181px;top:744px" width="16" height="16" viewBox="0 0 16 16"><path d="M7.500 9.500l-4.500 4.500" stroke="#2a58b8" stroke-width="2.200"/><circle cx="10" cy="6" r="4" fill="#e8f2ff" stroke="#2a68d0" stroke-width="1.600"/></svg><div class="a" style="left:1215px;top:742px;width:149px;height:24px;box-sizing:border-box;border:1px solid;border-color:#808080 #fff #fff #808080"></div><span class="t" style="left:1219.50px;top:747.5px;line-height:14px;font:normal bold 12px/14px 'Liberation Sans',sans-serif;color:#000;transform:scaleX(1.3);transform-origin:left;">«</span><svg style="left:1230px;top:744px" width="100" height="20" viewBox="1230 744 100 20"><circle cx="1241" cy="754" r="6.800" fill="none" stroke="#e02828" stroke-width="2.600" stroke-dasharray="2.400 2.940" stroke-dashoffset="1.200"/><circle cx="1241" cy="754" r="6" fill="#e02828"/><circle cx="1241" cy="754" r="4.500" fill="#fff"/><circle cx="1239.400" cy="752.600" r=".8" fill="#c02020"/><circle cx="1242.600" cy="752.600" r=".8" fill="#c02020"/><path d="M1238.600 755q2.400 2.600 4.800 0" fill="none" stroke="#c02020" stroke-width=".9"/><ellipse cx="1257.300" cy="752" rx="5" ry="6.300" fill="#8c8c8c" transform="rotate(-20 1257.300 752)"/><ellipse cx="1257.300" cy="752" rx="3.400" ry="4.500" fill="#505458" transform="rotate(-20 1257.300 752)"/><circle cx="1256" cy="751" r="1.500" fill="#b8c0c8"/><path d="M1252.500 748q-1.500 2.500 0 5" fill="none" stroke="#4050b0" stroke-width="1"/><path d="M1259.500 760.500q4.500-1 6-5.500M1262 762q3-1 4.500-4.500M1258 758.500q3.500-.5 5.500-4.500" fill="none" stroke="#8090f0" stroke-width=".9"/><circle cx="1277" cy="754" r="7.900" fill="#3f9a1e"/><ellipse cx="1277" cy="751" rx="6.500" ry="4.500" fill="#66b83a" opacity=".55"/><path d="M1275.800 752.500h2.400l.3 6h-3z" fill="#fff"/><circle cx="1277" cy="749.800" r="1.400" fill="#fff"/><path d="M1289.500 746.700h13v14.800h-15v-12.800z" fill="#fff" stroke="#a81ea8" stroke-width="1.300"/><path d="M1287.800 759.800h13.500" stroke="#e8c8e8" stroke-width="1"/><path d="M1313 762L1304.800 751.500Q1313 741.500 1321.200 751.500Z" fill="#00e000" stroke="#0a6a0a" stroke-width=".8"/><path d="M1307.600 752.500q5.400-5.400 10.800 0M1309.800 756q3.200-3.400 6.400 0" fill="none" stroke="#083808" stroke-width="1.300"/><rect x="1310.500" y="757" width="5" height="5" rx="1" fill="#00e000" stroke="#0a6a0a" stroke-width=".6"/></svg><span class="t" style="left:1290.00px;top:746px;line-height:16px;font:normal bold 14px/16px 'Liberation Sans',sans-serif;color:#7a2590;transform:scaleX(.95);transform-origin:left;">N</span><span class="t" style="left:1328.00px;top:748px;line-height:12px;font:normal normal 11px/12px 'Liberation Sans',sans-serif;color:#000;letter-spacing:-0.008px;">22:05</span></div></body></html>
